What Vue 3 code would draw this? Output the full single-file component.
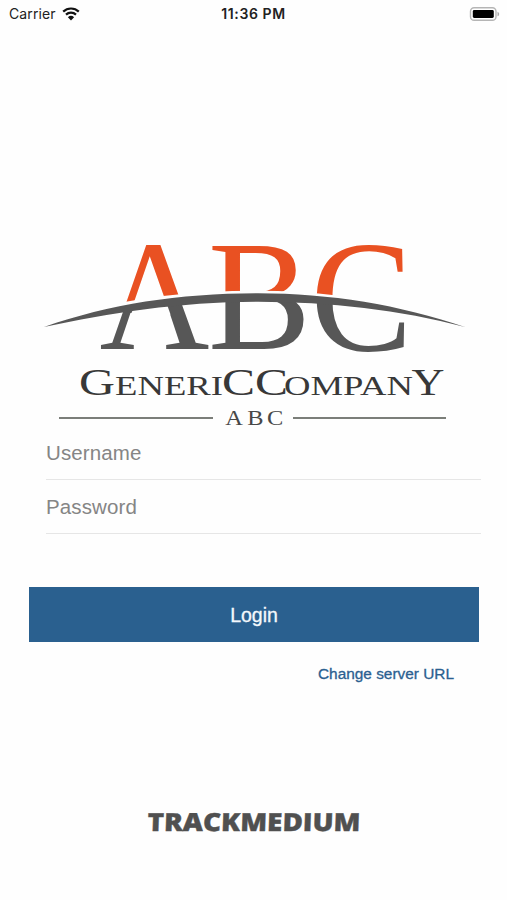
<template>
  <main class="screen">
    <header class="status-bar">
      <div class="carrier">
        <span>Carrier</span>
        <svg class="wifi" viewBox="0 0 18 14">
          <path d="M1.2 4.6a11.3 11.3 0 0 1 15.6 0" />
          <path d="M4 7.6a7.2 7.2 0 0 1 10 0" />
          <path class="dot" d="M5.9 10.2a4.5 4.5 0 0 1 6.2 0L9 13.4z" />
        </svg>
      </div>
      <time>11:36 PM</time>
      <svg class="battery" viewBox="0 0 32 16">
        <rect class="shell" x="1.5" y="1.7" width="25.5" height="12.6" rx="3.6" />
        <rect x="3.8" y="4" width="21" height="8" rx="1.4" />
        <path class="cap" d="M28.5 5.7c2.2.8 2.2 3.8 0 4.6z" />
      </svg>
    </header>

    <svg class="logo" viewBox="35 235 440 200">
      <defs>
        <!-- each letter turns from orange to grey where the arc crosses it -->
        <linearGradient
          v-for="l in letters"
          :id="`split-${l.char}`"
          :key="l.char"
          gradientUnits="userSpaceOnUse"
          :x1="l.split[0]"
          :y1="l.split[1]"
          :x2="l.split[2]"
          :y2="l.split[3]"
        >
          <stop offset="0" stop-color="#e95122" />
          <stop offset="0" stop-color="#575757" />
        </linearGradient>
      </defs>
      <text
        v-for="l in letters"
        :key="l.char"
        :x="l.x"
        :y="l.y"
        :font-size="l.size"
        :textLength="l.width"
        :fill="`url(#split-${l.char})`"
        lengthAdjust="spacingAndGlyphs"
      >{{ l.char }}</text>
      <path class="cutout" d="M134.5 306L130.8 314.5H170.5L166.5 303z" />
      <path class="gap" d="M90 312.5C140 299 195 293.3 258 293.3C320 293.3 370 301 420 313" />
      <path
        class="swoosh"
        d="M44 327C110 304 180 293.3 258 293.3C330 293.3 400 305 465 327C400 310 330 301.8 258 301.8C180 301.8 110 313 44 327z"
      />
      <g class="company">
        <text
          v-for="(p, i) in company"
          :key="i"
          :x="p.x"
          y="395.3"
          :font-size="p.size"
          :textLength="p.width"
          lengthAdjust="spacingAndGlyphs"
        >{{ p.text }}</text>
      </g>
      <path class="rule" d="M59 418H213M293 418H446" />
      <text class="tagline" x="0 18.6 35.2" transform="translate(225.2 425) scale(1.19 1)">ABC</text>
    </svg>

    <form class="login" @submit.prevent>
      <input v-model="username" type="text" placeholder="Username" />
      <input v-model="password" type="password" placeholder="Password" />
      <button type="submit">Login</button>
    </form>
    <a class="server">Change server URL</a>

    <svg class="brand" viewBox="0 0 220 26">
      <text
        x="3"
        y="21.3"
        textLength="213"
        lengthAdjust="spacingAndGlyphs"
        transform="translate(1 0) skewX(-2)"
      >TRACKMEDIUM</text>
    </svg>
  </main>
</template>

<script setup>
import { ref } from 'vue';

const username = ref('');
const password = ref('');

const letters = [
  { char: 'A', x: 99.5, y: 349, size: 157.5, width: 110, split: [150, 304.5, 158, 354] },
  { char: 'B', x: 208, y: 349, size: 156, width: 103, split: [258, 296, 258, 346] },
  { char: 'C', x: 310.5, y: 349.5, size: 159, width: 102, split: [323, 297, 320, 347] },
];

const company = [
  { text: 'G', x: 79, size: 37.5, width: 36 },
  { text: 'ENERI', x: 115, size: 27, width: 108 },
  { text: 'C', x: 222, size: 37.5, width: 33 },
  { text: 'C', x: 255, size: 37.5, width: 33 },
  { text: 'OMPAN', x: 284, size: 27, width: 129 },
  { text: 'Y', x: 411.5, size: 37.5, width: 33 },
];
</script>

<style>
body {
  margin: 0;
  background: #fefefe;
}
</style>

<style scoped>
.screen {
  display: flex;
  flex-direction: column;
  width: 507px;
  height: 900px;
  overflow: hidden;
  background: #fefefe;
  font-family: 'Liberation Sans', Arial, sans-serif;
}

.status-bar {
  display: grid;
  grid-template-columns: 1fr auto 1fr;
  align-items: center;
  height: 27px;
  padding: 0 6px 0 9px;
  font-family: Inter, sans-serif;
  font-size: 14px;
  line-height: 16px;
  color: #222;
}

.carrier {
  display: flex;
  align-items: center;
  gap: 6px;
  letter-spacing: 0.1px;
}

.wifi {
  width: 18px;
  height: 14px;
  fill: none;
  stroke: #111;
  stroke-width: 2.2;
}

.wifi .dot {
  fill: #111;
  stroke: none;
}

.status-bar time {
  margin-right: 3px;
  font-weight: 600;
  letter-spacing: 0.6px;
}

.battery {
  justify-self: end;
  width: 32px;
  height: 16px;
}

.battery .shell {
  fill: #fff;
  stroke: #b5b5b5;
  stroke-width: 1.4;
}

.battery .cap {
  fill: #aaa;
}

.logo {
  width: 440px;
  height: 200px;
  margin: 208px 0 0 35px;
  font-family: 'Liberation Serif', 'Times New Roman', serif;
}

.cutout {
  fill: #fefefe;
}

.gap {
  fill: none;
  stroke: #fefefe;
  stroke-width: 5;
}

.swoosh {
  fill: #575757;
}

.company {
  fill: #383838;
}

.rule {
  stroke: #7b7e79;
  stroke-width: 2;
}

.tagline {
  fill: #484848;
  font-size: 20.5px;
}

.login {
  display: flex;
  flex-direction: column;
  margin: -9px 28px 0 29px;
}

.login input {
  box-sizing: border-box;
  height: 54px;
  margin: 0 -2px 0 17px;
  padding: 0;
  border: 0;
  border-bottom: 1px solid #e6e6e6;
  outline: 0;
  background: transparent;
  font: 20.5px 'Liberation Sans', Arial, sans-serif;
  letter-spacing: 0.12px;
}

.login input::placeholder {
  color: #858585;
  opacity: 1;
}

.login button {
  height: 55px;
  margin-top: 53px;
  padding: 2px 0 0;
  border: 0;
  background: #2a608f;
  color: #f4f8fc;
  font: 19.5px 'Liberation Sans', Arial, sans-serif;
  -webkit-text-stroke: 0.3px;
}

.server {
  align-self: flex-end;
  margin: 23px 53px 0 0;
  font-size: 15.4px;
  line-height: 18px;
  color: #2b6090;
  -webkit-text-stroke: 0.3px;
}

.brand {
  width: 220px;
  height: 26px;
  margin: 127px 0 0 144px;
  font-family: 'Open Sans', sans-serif;
  font-size: 25px;
  font-weight: 800;
  fill: #505050;
  stroke: #505050;
  stroke-width: 0.4;
}
</style>
